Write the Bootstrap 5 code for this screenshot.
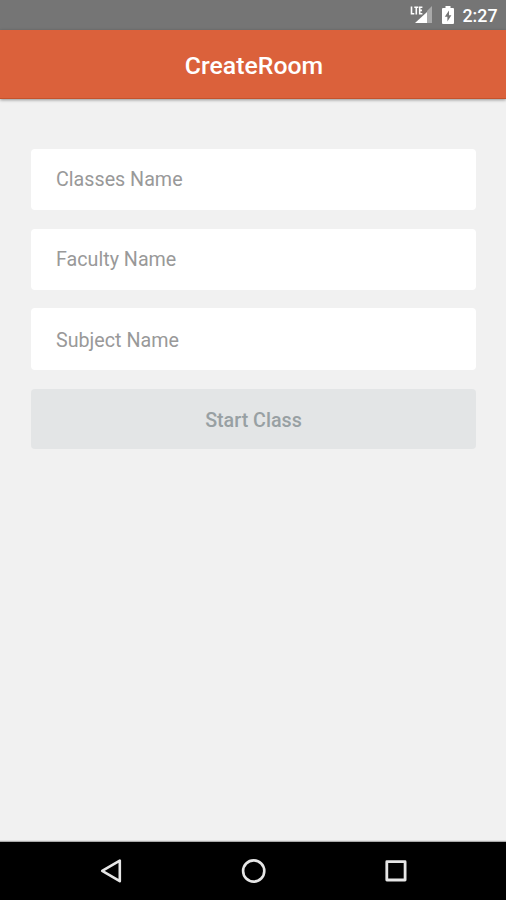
<!DOCTYPE html>
<html lang="en">
<head>
<meta charset="utf-8">
<meta name="viewport" content="width=device-width, initial-scale=1">
<title>CreateRoom</title>
<link href="https://cdn.jsdelivr.net/npm/bootstrap@5.3.0/dist/css/bootstrap.min.css" rel="stylesheet">
<style>
  body { font-family: Roboto, "Liberation Sans", sans-serif; background: #f1f1f1; }
  .status-bar { height: 30px; background: #757575; padding-right: 8.5px; }
  .status-bar .clock { font-size: 17.8px; line-height: 30px; padding-top: 1px; font-weight: 500; margin-left: 7px; }
  .app-bar { height: 69px; background: #db613b; border-bottom: 1px solid #c4532c; box-shadow: 0 1px 3px rgba(0,0,0,.4); }
  .app-bar h1 { font-size: 24.8px; line-height: 28px; font-weight: 500; padding: 4px 0 0 2px; }
  .room-form { padding: 50px 30px 0 31px; gap: 19px; }
  .room-form .form-control { height: 61px; padding: 0 25px; font-size: 19.7px; border-radius: 4px; background: #fff; color: #444; }
  .room-form .form-control::placeholder { color: #999; }
  .room-form .subject { height: 62px; padding-top: 2px; margin-top: -1px; }
  .room-form .btn { height: 60px; font-size: 19.7px; font-weight: 500; border-radius: 4px; background: #e3e5e6; color: #98a0a3; opacity: 1; padding: 9px 0 5px; }
  .nav-keys { height: 58px; padding: 0 39px 0 41px; background: #000; box-shadow: 0 -1px 0 #aaa, 0 -2px 0 #e2e2e2; }
</style>
</head>
<body class="d-flex flex-column vh-100 overflow-hidden">
  <div class="status-bar d-flex align-items-center justify-content-end text-white flex-shrink-0">
    <svg width="24" height="22" viewBox="0 0 24 22" fill="none" aria-label="LTE signal">
      <path d="M23 2V19H18V7Z" fill="#a9a9a9"/>
      <path d="M18 8V19H6Z" fill="#fff"/>
      <path d="M2.5 2.5V9.7H5.3M5.3 3.2H9.3M7.3 3.2V10.4M13.4 3.2H10.7V9.7H13.4M10.7 6.4H13" stroke="#fff" stroke-width="1.6"/>
    </svg>
    <svg class="ms-2" width="14" height="20" viewBox="0 0 14 20" aria-label="Battery charging">
      <path d="M4.5 1H9.5V3H12Q13 3 13 4V18Q13 19 12 19H2Q1 19 1 18V4Q1 3 2 3H4.5Z" fill="#fff"/>
      <path d="M8 5.5L3.8 11.7H6.4V16.5L10.4 10.2H8Z" fill="#757575"/>
    </svg>
    <span class="clock">2:27</span>
  </div>
  <header class="app-bar d-flex align-items-center justify-content-center text-white flex-shrink-0">
    <h1 class="mb-0">CreateRoom</h1>
  </header>
  <main class="flex-grow-1">
    <form class="room-form d-flex flex-column">
      <input class="form-control border-0" type="text" placeholder="Classes Name" aria-label="Classes Name">
      <input class="form-control border-0" type="text" placeholder="Faculty Name" aria-label="Faculty Name">
      <input class="form-control border-0 subject" type="text" placeholder="Subject Name" aria-label="Subject Name">
      <button class="btn border-0 w-100 d-flex align-items-center justify-content-center" type="button" disabled>Start Class</button>
    </form>
  </main>
  <nav class="nav-keys row g-0 align-items-center text-center flex-shrink-0" aria-label="System navigation">
    <div class="col"><svg class="d-block mx-auto" width="26" height="26" viewBox="0 0 26 26" fill="none" stroke="#e6e6e6" stroke-width="2.6" stroke-linejoin="round"><path d="M20.8 2.6V23.2L3.2 12.9Z"/></svg></div>
    <div class="col"><svg class="d-block mx-auto" width="26" height="26" viewBox="0 0 26 26" fill="none" stroke="#e6e6e6" stroke-width="2.6"><circle cx="12.7" cy="13" r="10.6"/></svg></div>
    <div class="col"><svg class="d-block mx-auto" width="26" height="26" viewBox="0 0 26 26" fill="none" stroke="#e6e6e6" stroke-width="2.8" stroke-linejoin="round"><rect x="3.8" y="3.7" width="18.3" height="18.3"/></svg></div>
  </nav>
  <script src="https://cdn.jsdelivr.net/npm/bootstrap@5.3.0/dist/js/bootstrap.bundle.min.js"></script>
</body>
</html>
